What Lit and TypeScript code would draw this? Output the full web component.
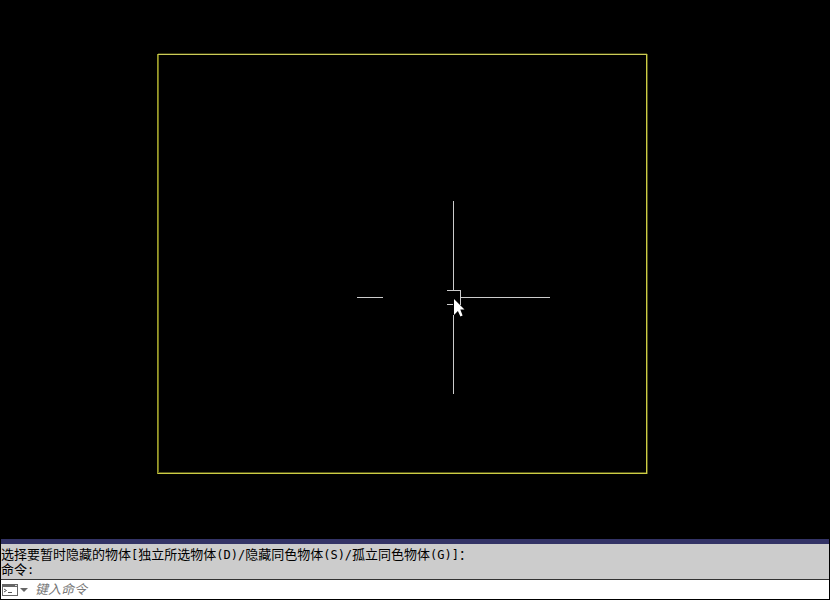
import { LitElement, html, css } from "lit";
import { customElement, state } from "lit/decorators.js";

@customElement("app-root")
class AppRoot extends LitElement {
  static styles = css`
    :host {
      display: flex;
      flex-direction: column;
      height: 100vh;
      background: #000;
      overflow: hidden;
    }
    .canvas {
      display: block;
      flex: 1;
      min-height: 0;
      width: 100%;
    }
    .panel {
      box-sizing: border-box;
      border: 1px solid #000;
      border-top: 0;
      font-family: "Noto Sans CJK SC", sans-serif;
      font-size: 13px;
      line-height: 15px;
      color: #000;
    }
    .splitter {
      height: 5px;
      background: #333366;
    }
    .history {
      background: #ccc;
      padding: 2px 0 3px;
      border-bottom: 1px solid #333;
    }
    .line {
      margin: 0;
      height: 15px;
      white-space: pre;
    }
    .code {
      font-family: "DejaVu Sans Mono", monospace;
      font-size: 12px;
    }
    .entry {
      display: flex;
      align-items: center;
      height: 19px;
      background: #fff;
    }
    .recent {
      display: flex;
      padding: 0;
      border: 0;
      background: none;
    }
    .input {
      flex: 1;
      min-width: 0;
      height: 19px;
      margin: 0 0 0 6px;
      padding: 0 0 2px;
      box-sizing: border-box;
      border: 0;
      outline: 0;
      background: none;
      font: 13px/17px "Noto Sans CJK SC", sans-serif;
      color: #000;
    }
    .input::placeholder {
      color: #777;
      font-style: italic;
      opacity: 1;
    }
  `;

  @state() private command = "";

  render() {
    return html`
      <svg class="canvas" viewBox="0 0 830 539" shape-rendering="crispEdges" fill="none">
        <path d="M157 54h1v420h-1z" fill="#99992c" />
        <path d="M158 53h489v1h-489z" fill="#3a3a10" />
        <path d="M158 54h489v1h-489z" fill="#cccc58" />
        <path d="M158 55h1v418h-1z" fill="#77771c" />
        <path d="M646 54h1v420h-1zM158 473h489v1h-489z" fill="#cccc44" />
        <path d="M647 54h1v420h-1zM158 472h488v1h-488z" fill="#55551a" />
        <path
          d="M453 201h1v90h-1zM453 315h1v79h-1zM357 297h26v1h-26zM461 297h89v1h-89zM447 290h14v1h-14zM460 291h1v14h-1zM447 304h6v1h-6z"
          fill="#ccc"
        />
        <path d="M454 299L464.500 309.500H460.300L462.600 315.500L460.400 316.500L457.900 311L454 315Z" fill="#fff" shape-rendering="auto" />
      </svg>
      <section class="panel">
        <div class="splitter"></div>
        <div class="history">
          <p class="line">选择要暂时隐藏的物体<span class="code">[</span>独立所选物体<span class="code">(D)/</span>隐藏同色物体<span class="code">(S)/</span>孤立同色物体<span class="code">(G)]</span>：</p>
          <p class="line">命令<span class="code">:</span></p>
        </div>
        <div class="entry">
          <button class="recent" aria-label="最近使用的命令">
            <svg width="28" height="13" shape-rendering="crispEdges">
              <path d="M1 1h16v12h-16z" fill="#666" />
              <path d="M2 4h14v8h-14z" fill="#fff" />
              <path d="M14 2h2v1h-2z" fill="#ddd" />
              <path d="M3 6L5.500 7.500L3 9M7 9.500h4" fill="none" stroke="#555" shape-rendering="auto" />
              <path d="M19 5h8L23 9z" fill="#666" shape-rendering="auto" />
            </svg>
          </button>
          <input
            class="input"
            aria-label="命令"
            placeholder="键入命令"
            .value=${this.command}
            @input=${(e: Event) => (this.command = (e.target as HTMLInputElement).value)}
          />
        </div>
      </section>
    `;
  }
}
